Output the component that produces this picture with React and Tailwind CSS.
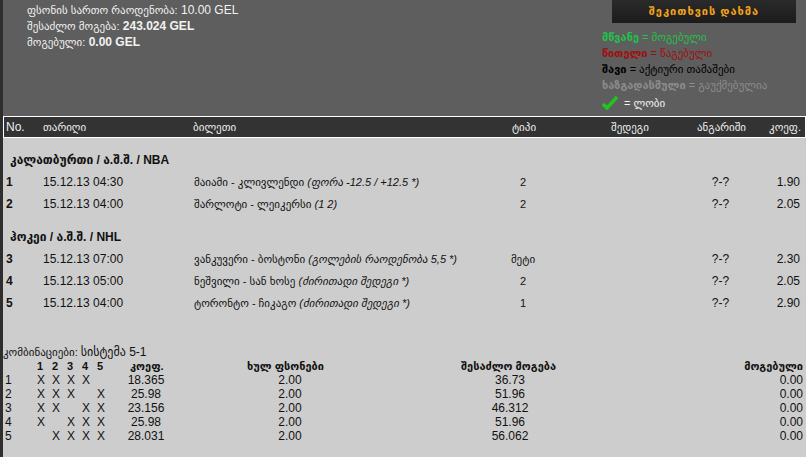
import React from 'react';

const sections = [
  {
    title: 'კალათბურთი / ა.შ.შ. / NBA',
    rows: [
      { n: 1, date: '15.12.13 04:30', ev: 'მაიამი - კლივლენდი', note: '(ფორა -12.5 / +12.5 *)', type: '2', coef: '1.90' },
      { n: 2, date: '15.12.13 04:00', ev: 'შარლოტი - ლეიკერსი', note: '(1 2)', type: '2', coef: '2.05' },
    ],
  },
  {
    title: 'ჰოკეი / ა.შ.შ. / NHL',
    rows: [
      { n: 3, date: '15.12.13 07:00', ev: 'ვანკუვერი - ბოსტონი', note: '(გოლების რაოდენობა 5,5 *)', type: 'მეტი', coef: '2.30' },
      { n: 4, date: '15.12.13 05:00', ev: 'ნეშვილი - სან ხოსე', note: '(ძირითადი შედეგი *)', type: '2', coef: '2.05' },
      { n: 5, date: '15.12.13 04:00', ev: 'ტორონტო - ჩიკაგო', note: '(ძირითადი შედეგი *)', type: '1', coef: '2.90' },
    ],
  },
];

const combos = [
  { n: 1, x: [1, 1, 1, 1, 0], coef: '18.365', win: '36.73' },
  { n: 2, x: [1, 1, 1, 0, 1], coef: '25.98', win: '51.96' },
  { n: 3, x: [1, 1, 0, 1, 1], coef: '23.156', win: '46.312' },
  { n: 4, x: [1, 0, 1, 1, 1], coef: '25.98', win: '51.96' },
  { n: 5, x: [0, 1, 1, 1, 1], coef: '28.031', win: '56.062' },
];

const cols = 'grid grid-cols-[37px_149px_294px_80px_130px_55px_55px]';
const comboCols = 'grid grid-cols-[34px_15px_15px_15px_15px_15px_68px_220px_220px_1fr]';

const Check = () => (
  <svg width="16" height="14" viewBox="0 0 16 14" className="inline-block">
    <path d="M1 8 L5 12 L15 1" fill="none" stroke="#22c51e" strokeWidth="3.5" strokeLinejoin="miter" />
  </svg>
);

export default function App() {
  return (
    <div className="w-[806px] h-[457px] bg-[#2e2e2e] pl-[3px] overflow-hidden text-[12px] leading-none font-['Liberation_Sans','DejaVu_Sans',sans-serif]">
      <div className="h-[116px] bg-[#5e5e5e] flex justify-between">
        <div className="pl-[24px] pt-[4px] text-[#f2f2f2] flex flex-col gap-[4px] text-[12px]">
          <div><span className="text-[11px]">ფსონის სართო რაოდენობა:</span> 10.00 GEL</div>
          <div><span className="text-[11px]">შესაძლო მოგება:</span> <b>243.024 GEL</b></div>
          <div><span className="text-[11px]">მოგებული:</span> <b>0.00 GEL</b></div>
        </div>
        <div className="w-[204px] flex flex-col">
          <div className="ml-[10px] mr-[10px] h-[23px] bg-gradient-to-b from-[#2a2a2a] to-[#1c1c1c] flex items-center justify-center text-[#f5a31a] font-bold text-[11px] tracking-[1px]">
            შეკითხვის დახმა
          </div>
          <div className="pt-[9px] flex flex-col gap-[5px] text-[11px]">
            <div className="text-[#1fc24a]"><b>მწვანე</b> = მოგებული</div>
            <div className="text-[#a30d0d]"><b>წითელი</b> = წაგებული</div>
            <div className="text-[#000]"><b>შავი</b> = აქტიური თამაშები</div>
            <div className="text-[#8c8c8c]"><b>ხაზგადასმული</b> = გაუქმებულია</div>
            <div className="text-[#f2f2f2] flex items-center gap-[6px]"><Check /> = ლობი</div>
          </div>
        </div>
      </div>
      <div className="bg-[#cdcdcd] h-[341px] text-[#111]">
        <div className={`${cols} h-[22px] items-center bg-[#333] border border-white text-[#eee] text-[11px]`}>
          <div className="pl-[2px] text-[12px]">No.</div>
          <div className="pl-[2px]">თარიღი</div>
          <div className="pl-[3px]">ბილეთი</div>
          <div className="text-center">ტიპი</div>
          <div className="pl-[47px]">შედეგი</div>
          <div className="text-center">ანგარიში</div>
          <div className="text-right pr-[3px]">კოეფ.</div>
        </div>
        {sections.map((s) => (
          <div key={s.title}>
            <div className="pt-[10px] pl-[7px] font-bold text-[12px] h-[33px] flex items-center">{s.title}</div>
            {s.rows.map((r) => (
              <div key={r.n} className={`${cols} h-[22px] items-center`}>
                <div className="pl-[3px] font-bold">{r.n}</div>
                <div className="pl-[3px]">{r.date}</div>
                <div className="pl-[5px] text-[11px]">{r.ev} <i>{r.note}</i></div>
                <div className="text-center text-[11px]">{r.type}</div>
                <div></div>
                <div className="text-center">?-?</div>
                <div className="text-right pr-[3px]">{r.coef}</div>
              </div>
            ))}
          </div>
        ))}
        <div className="pt-[31px]">
          <div className="h-[14px] flex items-center text-[11px]">კომბინაციები: <span className="text-[12px] ml-[3px]">სისტემა 5-1</span></div>
          <div className={`${comboCols} h-[14px] items-center font-bold text-[11px]`}>
            <div></div>
            <div>1</div><div>2</div><div>3</div><div>4</div><div>5</div>
            <div className="pl-[18px]">კოეფ.</div>
            <div className="pl-[67px]">ხულ ფსონები</div>
            <div className="pl-[61px]">შესაძლო მოგება</div>
            <div className="text-right pr-[3px]">მოგებული</div>
          </div>
          {combos.map((c) => (
            <div key={c.n} className={`${comboCols} h-[14px] items-center`}>
              <div className="pl-[2px]">{c.n}</div>
              {c.x.map((v, i) => <div key={i}>{v ? 'X' : ''}</div>)}
              <div className="text-center">{c.coef}</div>
              <div className="text-center">2.00</div>
              <div className="text-center">{c.win}</div>
              <div className="text-right pr-[3px]">0.00</div>
            </div>
          ))}
        </div>
      </div>
    </div>
  );
}
